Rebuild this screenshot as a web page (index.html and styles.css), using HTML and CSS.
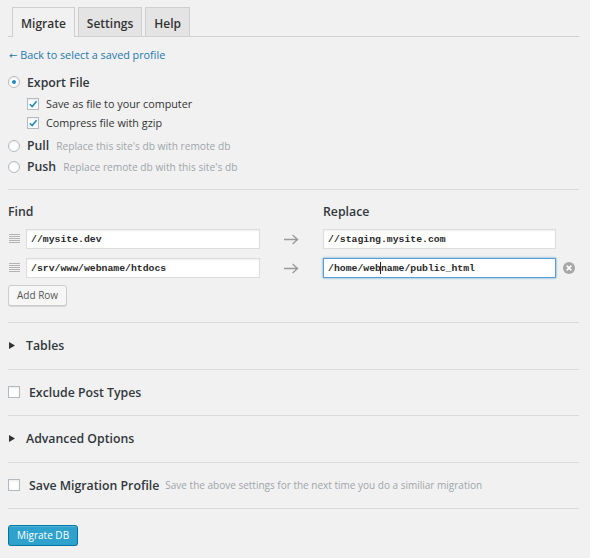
FILE: index.html
```html
<!DOCTYPE html>
<html>
<head>
<meta charset="utf-8">
<link rel="stylesheet" href="styles.css">
</head>
<body>
<div class="wrap">
  <nav class="tabs">
    <a class="tab active">Migrate</a>
    <a class="tab">Settings</a>
    <a class="tab">Help</a>
  </nav>

  <a class="back"><span class="back-arrow">←</span> Back to select a saved profile</a>

  <div class="actions">
    <div class="opt-row export">
      <span class="radio checked"></span>
      <span class="opt-label">Export File</span>
    </div>
    <div class="sub-opts">
      <div class="check-row">
        <span class="cb"><svg width="10" height="10" viewBox="0 0 10 10"><path d="M1.8 5.2 L4.2 7.6 L8.6 2.2" fill="none" stroke="#1e8cbe" stroke-width="1.6"/></svg></span>
        <span>Save as file to your computer</span>
      </div>
      <div class="check-row">
        <span class="cb"><svg width="10" height="10" viewBox="0 0 10 10"><path d="M1.8 5.2 L4.2 7.6 L8.6 2.2" fill="none" stroke="#1e8cbe" stroke-width="1.6"/></svg></span>
        <span>Compress file with gzip</span>
      </div>
    </div>
    <div class="opt-row remote first">
      <span class="radio"></span>
      <span class="opt-label">Pull</span>
      <span class="desc">Replace this site's db with remote db</span>
    </div>
    <div class="opt-row remote">
      <span class="radio"></span>
      <span class="opt-label">Push</span>
      <span class="desc">Replace remote db with this site's db</span>
    </div>
  </div>

  <div class="find-replace">
    <div class="fr-grid">
      <div class="col-label find-label">Find</div>
      <div class="col-label replace-label">Replace</div>
      <span></span>

      <span class="handle"><svg width="11" height="10" viewBox="0 0 11 10"><path d="M0 0.5H11M0 2.5H11M0 4.5H11M0 6.5H11M0 8.5H11" stroke="#b3b3b3" stroke-width="1"/></svg></span>
      <input class="field-input" type="text" value="//mysite.dev">
      <span class="arrow"><svg width="15" height="11" viewBox="0 0 15 11"><path d="M0 5.5H14M8.6 1L13.6 5.5L8.6 10" fill="none" stroke="#9a9a9a" stroke-width="1.3"/></svg></span>
      <input class="field-input" type="text" value="//staging.mysite.com">
      <span></span>

      <span class="handle"><svg width="11" height="10" viewBox="0 0 11 10"><path d="M0 0.5H11M0 2.5H11M0 4.5H11M0 6.5H11M0 8.5H11" stroke="#b3b3b3" stroke-width="1"/></svg></span>
      <input class="field-input" type="text" value="/srv/www/webname/htdocs">
      <span class="arrow"><svg width="15" height="11" viewBox="0 0 15 11"><path d="M0 5.5H14M8.6 1L13.6 5.5L8.6 10" fill="none" stroke="#9a9a9a" stroke-width="1.3"/></svg></span>
      <span class="field-wrap">
        <input class="field-input focused" type="text" value="/home/webname/public_html">
        <span class="caret"></span>
      </span>
      <span class="remove"><svg width="12" height="12" viewBox="0 0 12 12"><circle cx="6" cy="6" r="6" fill="#a7a7a7"/><path d="M3.7 3.7L8.3 8.3M8.3 3.7L3.7 8.3" stroke="#fff" stroke-width="1.7"/></svg></span>
    </div>
    <button class="btn">Add Row</button>
  </div>

  <div class="section">
    <svg class="tri" width="6" height="7" viewBox="0 0 6 7"><polygon points="0,0 6,3.5 0,7" fill="#333"/></svg>
    <span class="opt-label">Tables</span>
  </div>
  <div class="section gap9">
    <span class="cb"></span>
    <span class="opt-label">Exclude Post Types</span>
  </div>
  <div class="section">
    <svg class="tri" width="6" height="7" viewBox="0 0 6 7"><polygon points="0,0 6,3.5 0,7" fill="#333"/></svg>
    <span class="opt-label">Advanced Options</span>
  </div>
  <div class="section gap9">
    <span class="cb"></span>
    <span class="opt-label">Save Migration Profile</span>
    <span class="desc save-desc">Save the above settings for the next time you do a similiar migration</span>
  </div>

  <div class="footer">
    <button class="btn primary">Migrate DB</button>
  </div>
</div>
</body>
</html>
```

FILE: styles.css
```css
html, body {
  margin: 0;
  padding: 0;
}

body {
  background: #f1f1f1;
  font-family: "Open Sans", "Liberation Sans", sans-serif;
  color: #333;
  font-size: 11px;
}

.wrap {
  margin-left: 8px;
  width: 571px;
}

/* Tabs */
.tabs {
  display: flex;
  align-items: flex-start;
  gap: 3px;
  height: 29px;
  padding: 7px 0 0 4px;
  border-bottom: 1px solid #cfcfcf;
}

.tab {
  display: block;
  box-sizing: border-box;
  height: 29px;
  padding: 3px 8px 0;
  border: 1px solid #cfcfcf;
  border-bottom: none;
  background: #e4e4e4;
  font-size: 12px;
  font-weight: 600;
  line-height: 25px;
  color: #333;
}

.tab.active {
  background: #f1f1f1;
  height: 30px;
}

/* Back link */
.back {
  display: block;
  margin-top: 10px;
  line-height: 16px;
  color: #2478ad;
  font-size: 10.8px;
  text-decoration: none;
  padding-left: 1px;
}

.back-arrow {
  font-family: "DejaVu Sans", sans-serif;
  font-size: 10px;
}

/* Action options */
.actions {
  padding-bottom: 12px;
}

.opt-row {
  display: flex;
  align-items: center;
  gap: 7px;
  height: 18px;
}

.opt-row.export {
  margin-top: 9px;
}

.opt-row.remote {
  height: 21px;
}

.opt-row.first {
  margin-top: 3px;
}

.radio {
  box-sizing: border-box;
  width: 12px;
  height: 12px;
  flex: none;
  border: 1px solid #b4b9be;
  border-radius: 50%;
  background: #fff;
  box-shadow: inset 0 1px 2px rgba(0, 0, 0, 0.08);
  display: flex;
  align-items: center;
  justify-content: center;
}

.radio.checked::before {
  content: "";
  width: 4px;
  height: 4px;
  border-radius: 50%;
  background: #1e8cbe;
}

.opt-label {
  font-size: 12.3px;
  font-weight: 600;
  color: #32373c;
}

.desc {
  font-size: 10.2px;
  color: #a0a5aa;
}

.sub-opts {
  margin-top: 3px;
  padding-left: 19px;
}

.check-row {
  display: flex;
  align-items: center;
  gap: 7px;
  height: 19px;
  font-size: 10.8px;
  color: #333;
}

.cb {
  box-sizing: border-box;
  width: 12px;
  height: 12px;
  flex: none;
  border: 1px solid #b4b9be;
  background: #fff;
  box-shadow: inset 0 1px 2px rgba(0, 0, 0, 0.08);
  display: flex;
  align-items: center;
  justify-content: center;
}

.cb svg {
  display: block;
}

/* Find / replace */
.find-replace {
  border-top: 1px solid #dadada;
  padding: 13px 0 16px;
}

.fr-grid {
  display: grid;
  grid-template-columns: 18px 234px 63px 233px 1fr;
  row-gap: 9px;
  align-items: center;
}

.col-label {
  font-size: 12.3px;
  font-weight: 600;
  line-height: 17px;
  color: #32373c;
}

.find-label {
  grid-column: 1 / 3;
}

.replace-label {
  grid-column: 4 / 5;
}

.handle {
  display: flex;
  padding-left: 1px;
}

.arrow {
  display: flex;
  justify-content: center;
  padding-right: 1px;
}

.field-input {
  display: block;
  box-sizing: border-box;
  width: 100%;
  height: 20px;
  margin: 0;
  padding: 0 4px;
  border: 1px solid #dddddd;
  background: #fff;
  box-shadow: inset 0 1px 2px rgba(0, 0, 0, 0.07);
  font-family: "Liberation Mono", monospace;
  font-size: 9.8px;
  font-weight: 600;
  line-height: 18px;
  color: #2a2a2a;
  outline: none;
}

.field-input.focused {
  border-color: #5b9dd9;
  box-shadow: 0 0 2px rgba(30, 140, 190, 0.8);
}

.field-wrap {
  position: relative;
  display: block;
}

.caret {
  position: absolute;
  left: 57px;
  top: 4px;
  width: 1px;
  height: 12px;
  background: #222;
}

.remove {
  display: flex;
  padding-left: 7px;
}

.btn {
  display: block;
  box-sizing: border-box;
  height: 21px;
  margin: 7px 0 0;
  padding: 0 8px;
  border: 1px solid #cccccc;
  border-radius: 3px;
  background: #f7f7f7;
  box-shadow: 0 1px 0 #d5d5d5;
  font-family: "Open Sans", sans-serif;
  font-size: 10px;
  color: #555;
  line-height: 19px;
}

/* Collapsible sections */
.section {
  display: flex;
  align-items: center;
  gap: 11px;
  height: 20px;
  padding: 12.5px 0 13px;
  border-top: 1px solid #dadada;
}

.section .tri {
  margin-left: 1px;
  flex: none;
}

.section.gap9 {
  gap: 9px;
}

.save-desc {
  font-size: 10px;
  margin-left: -3px;
}

/* Footer */
.footer {
  border-top: 1px solid #dadada;
  padding-top: 9px;
}

.btn.primary {
  margin-top: 7px;
  background: #2ea2cc;
  border-color: #0074a2;
  color: #fff;
  box-shadow: inset 0 1px 0 rgba(120, 200, 230, 0.5), 0 1px 0 rgba(0, 0, 0, 0.15);
}
```
